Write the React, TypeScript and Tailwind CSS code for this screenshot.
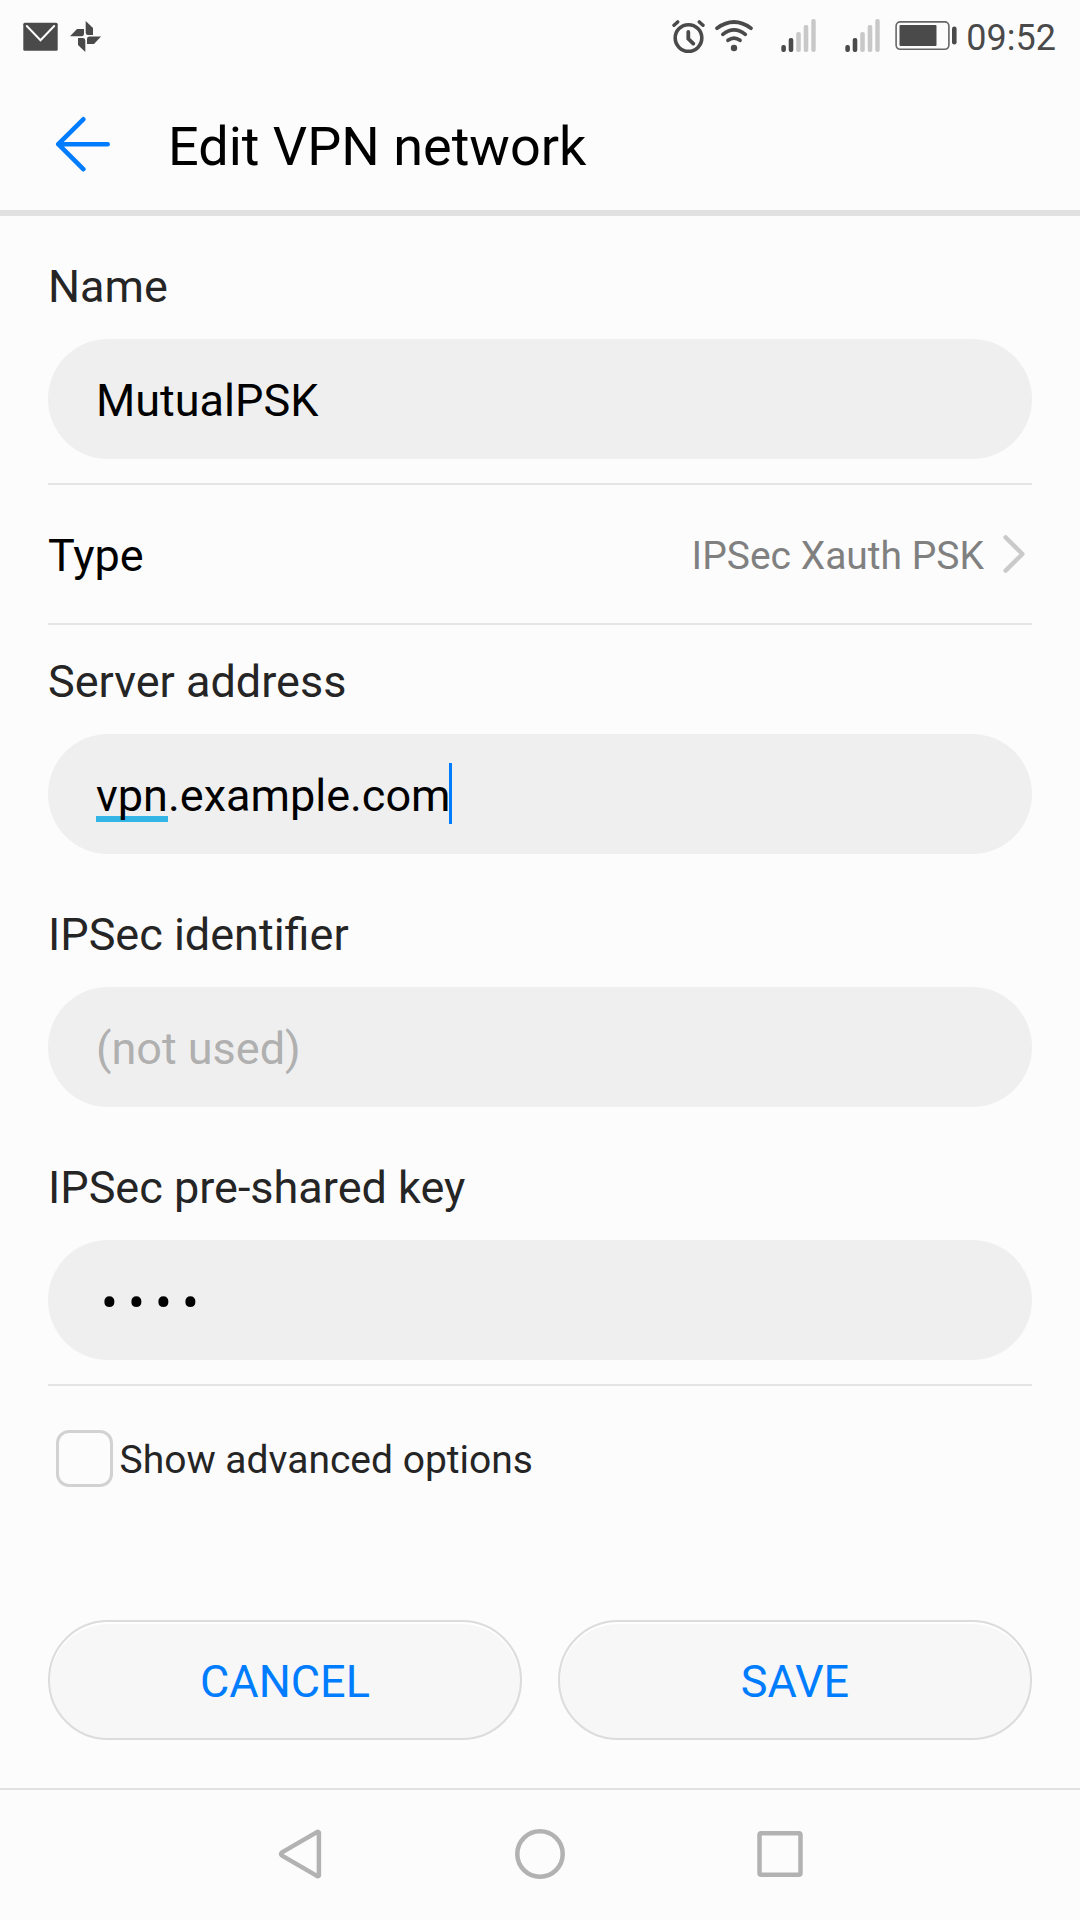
import type { ReactNode } from 'react';

function StatusBar() {
  return (
    <div className="flex h-[72px] shrink-0 items-start justify-between pl-[23px] pr-[24px] text-[#4a4a4a]">
      <div className="flex pt-[20px]">
        <svg className="mr-[12px] h-8 w-[35px]" viewBox="0 0 35 32" fill="none">
          <rect x="0.3" y="2.7" width="34.4" height="28" rx="1.5" fill="#4a4a4a" />
          <path d="M3.8 6 17.5 20.2 31.2 6" stroke="#fcfcfc" strokeWidth="2" strokeLinecap="round" />
        </svg>
        <svg className="h-8 w-[31px]" viewBox="0 0 31 32" fill="#4a4a4a">
          <path d="M15.7 1 23 8v7h-5q-2.3 0-2.3-2.5z" />
          <path d="M31 16.5 24 24h-7v-5q0-2.5 2.5-2.5z" />
          <path d="M15.3 32 8 25v-7h5q2.3 0 2.3 2.5z" />
          <path d="M0 16.3 7 9h7v5q0 2.3-2.5 2.3z" />
        </svg>
      </div>
      <div className="flex">
        <svg className="mr-[10px] mt-[18px] h-9 w-[33px]" viewBox="0 0 33 36" fill="none" stroke="#4a4a4a" strokeLinecap="round">
          <circle cx="16.5" cy="20" r="13.3" strokeWidth="3.6" />
          <path d="M16.3 14v6.8l5 4.8" strokeWidth="3.8" />
          <path d="M2 7.3 5.7 3.9M31 7.3 27.3 3.9" strokeWidth="3.4" />
        </svg>
        <svg className="mr-[28px] mt-[18px] h-9 w-[38px]" viewBox="0 0 38 36" fill="none" stroke="#4a4a4a" strokeWidth="3.7" strokeLinecap="round">
          <path d="M2 10.2Q19-2.2 36 10.2" />
          <path d="M7.8 16.4Q19 7.4 30.3 16.4" />
          <path d="M13 22.3Q19 18 25 22.3" />
          <circle cx="19" cy="30" r="3.2" fill="#4a4a4a" stroke="none" />
        </svg>
        <Signal />
        <div className="w-[29px]" />
        <Signal />
        <svg className="ml-[15px] mr-[9px] mt-[20px] h-8 w-[62px]" viewBox="0 0 62 32" fill="none">
          <rect x="1.1" y="1.9" width="52.8" height="27.4" rx="4.2" stroke="#666" strokeWidth="1.6" />
          <rect x="4.5" y="5" width="37" height="21" rx="1" fill="#4a4a4a" />
          <rect x="57" y="6.5" width="4.6" height="18" rx="2.3" fill="#4a4a4a" />
        </svg>
        <span className="mt-[16px] text-[36px] leading-[44px]">09:52</span>
      </div>
    </div>
  );
}

function Signal() {
  return (
    <svg className="mt-[18px] h-9 w-[35px]" viewBox="0 0 35 36">
      <g fill="#4a4a4a">
        <rect x="0.3" y="27" width="4.6" height="7" rx="2" />
        <rect x="7.7" y="20" width="4.6" height="14" rx="2" />
      </g>
      <g fill="#c8c8c8">
        <rect x="15.2" y="14" width="4.6" height="20" rx="2" />
        <rect x="22.7" y="7" width="4.6" height="27" rx="2" />
        <rect x="30.3" y="1" width="4.4" height="33" rx="2" />
      </g>
    </svg>
  );
}

function Field({ label, className, children }: { label: string; className: string; children: ReactNode }) {
  return (
    <div className={className}>
      <div className="h-[60px] text-[45px] leading-[60px] text-[#252525]">{label}</div>
      <div className="mt-[22px] flex h-[120px] items-center rounded-[60px] bg-[#efefef] pl-12 pt-1 text-[45px] leading-[60px] text-black">
        {children}
      </div>
    </div>
  );
}

function ActionButton({ children }: { children: ReactNode }) {
  return (
    <button className="flex h-[120px] w-[474px] items-center justify-center rounded-[60px] border-2 border-[#dcdcdc] bg-[#f7f7f7] pt-1 text-[45px] leading-[60px] text-[#007dff] shadow-[inset_0_2px_1px_#ffffff]">
      {children}
    </button>
  );
}

export default function App() {
  return (
    <div className="flex h-[1920px] w-[1080px] flex-col overflow-hidden bg-[#fcfcfc] font-['Roboto',sans-serif]">
      <StatusBar />
      <header className="flex h-36 shrink-0 items-center border-b-[6px] border-[#e1e1e1] pl-[55px] pt-[5px]">
        <svg className="mr-[57px] h-[56px] w-[56px]" viewBox="0 0 56 56" fill="none" stroke="#007dff" strokeWidth="4.6" strokeLinecap="round" strokeLinejoin="round">
          <path d="M28.3 3.3 3.3 28.2l25 25M3.3 28.2h49.4" />
        </svg>
        <h1 className="pt-[6px] text-[54px] leading-[64px] text-black">Edit VPN network</h1>
      </header>

      <main className="flex h-[1572px] shrink-0 flex-col px-12">
        <Field label="Name" className="pt-[41px]">MutualPSK</Field>
        <div className="mt-6 flex h-[142px] items-center justify-between border-y-2 border-[#e5e5e5]">
          <span className="pt-1 text-[45px] leading-[60px] text-black">Type</span>
          <div className="flex items-center pr-[6px]">
            <span className="pt-1 text-[39px] leading-[52px] text-[#808080]">IPSec Xauth PSK</span>
            <svg className="ml-[19px] h-10 w-[23px]" viewBox="0 0 23 40" fill="none" stroke="#cacaca" strokeWidth="4.4" strokeLinecap="round" strokeLinejoin="round">
              <path d="M2.6 3.4 19.4 20 2.6 36.6" />
            </svg>
          </div>
        </div>
        <Field label="Server address" className="pt-[27px]">
          <span className="relative isolate">
            vpn
            <span className="absolute bottom-1 left-0 -z-10 h-[6px] w-[72px] bg-[#33b5e5]" />
          </span>
          <span>.example.com</span>
          <span className="-ml-[2px] -mt-[6px] h-[61px] w-[3px] bg-[#007dff]" />
        </Field>
        <Field label="IPSec identifier" className="pt-[51px]">
          <span className="text-[#b0b0b0]">(not used)</span>
        </Field>
        <Field label="IPSec pre-shared key" className="pt-[51px]">
          <span className="pl-[5px] pt-[2px] text-[50px] tracking-[10.1px]">••••</span>
        </Field>
        <div className="mt-6 h-[2px] shrink-0 bg-[#e5e5e5]" />
        <label className="mt-[43px] flex h-[58px] shrink-0 items-center pl-[7.5px]">
          <span className="h-[57px] w-[57px] rounded-[13px] border-[3px] border-[#d2d2d2]" />
          <span className="ml-[7px] pt-[3px] text-[39px] leading-[52px] text-[#252525]">Show advanced options</span>
        </label>
        <div className="mt-[133px] flex justify-between">
          <ActionButton>CANCEL</ActionButton>
          <ActionButton>SAVE</ActionButton>
        </div>
      </main>

      <nav className="flex h-[132px] shrink-0 justify-center border-t-2 border-[#e1e1e1] pt-[38px]">
        <svg className="mr-[192px] h-[52px] w-[44px]" viewBox="0 0 44 52" fill="none" stroke="#b2b2b2" strokeWidth="4.5" strokeLinejoin="round">
          <path d="M40.9 4.6v42.8q-.5 1.3-2 .5L4 27.6q-2-1.6 0-3.2L38.9 4.1q1.5-.8 2 .5z" />
        </svg>
        <svg className="h-[52px] w-[52px]" viewBox="0 0 52 52" fill="none" stroke="#b2b2b2" strokeWidth="4.5">
          <circle cx="26" cy="26" r="22.7" />
        </svg>
        <svg className="ml-[190px] h-[52px] w-[47px]" viewBox="0 0 47 52" fill="none" stroke="#b2b2b2" strokeWidth="4.5">
          <rect x="3.5" y="5.3" width="41" height="41.4" rx="1.8" />
        </svg>
      </nav>
    </div>
  );
}
